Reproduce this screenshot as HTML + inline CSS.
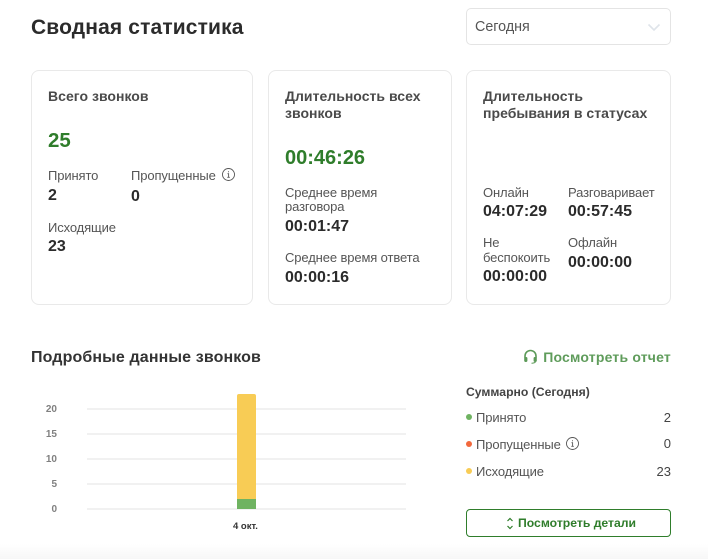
<!DOCTYPE html>
<html lang="ru"><head><meta charset="utf-8"><style>
html,body{margin:0;padding:0;background:#fff}
#p{position:relative;width:708px;height:559px;overflow:hidden;background:#fff;font-family:"Liberation Sans","DejaVu Sans",sans-serif;color:#333}
.t{position:absolute;white-space:nowrap;line-height:1}
.card{position:absolute;box-sizing:border-box;border:1px solid #e9e9e9;border-radius:8px;background:#fff;top:70px;height:235px}
.h{font-size:14px;font-weight:700;color:#4a4a4a;letter-spacing:.03px}
.l{font-size:13px;color:#555;letter-spacing:-.12px}
.v{font-size:16px;font-weight:700;color:#2b2b2b;letter-spacing:0}
.g{font-weight:700;color:#2f7d2b}
.gl{position:absolute;left:87px;width:319px;height:2px;background:#f1f1f1}
.y{position:absolute;left:39px;width:18px;text-align:right;font-size:10px;font-weight:700;color:#808080;line-height:1}
.dot{position:absolute;left:466px;width:6px;height:6px;border-radius:50%}
.r{position:absolute;right:37px;font-size:13px;color:#444;line-height:1}
</style></head><body><div id="p">
<div class="t" style="left:31px;top:17px;font-size:21px;font-weight:700;color:#2b2b2b;letter-spacing:.14px">Сводная статистика</div>
<div style="position:absolute;left:466px;top:8px;width:205px;height:37px;box-sizing:border-box;border:1px solid #e4e4e4;border-radius:5px"></div>
<div class="t" style="left:475px;top:20px;font-size:14.300px;color:#555">Сегодня</div>
<svg style="position:absolute;left:647px;top:23px" width="14" height="9" viewBox="0 0 14 9"><path d="M1.500 1.500 7 7l5.500-5.500" fill="none" stroke="#dfe4ea" stroke-width="1.600"/></svg>

<div class="card" style="left:31px;width:222px"></div>
<div class="card" style="left:268px;width:184px"></div>
<div class="card" style="left:466px;width:205px"></div>

<div class="t h" style="left:48px;top:89px">Всего звонков</div>
<div class="t g" style="left:48px;top:131px;font-size:20.500px">25</div>
<div class="t l" style="left:48px;top:169px">Принято</div>
<div class="t v" style="left:48px;top:188px">2</div>
<div class="t l" style="left:131px;top:169px">Пропущенные</div>
<svg style="position:absolute;left:221px;top:167px" width="15" height="15" viewBox="0 0 15 15"><circle cx="7.500" cy="7.500" r="6" fill="none" stroke="#555" stroke-width=".9"/><path d="M6.500 6.700h1.100v3.500M6.300 10.300h2.500M7.500 4.200v1.100" fill="none" stroke="#555" stroke-width=".9"/></svg>
<div class="t v" style="left:131px;top:189px">0</div>
<div class="t l" style="left:48px;top:221px">Исходящие</div>
<div class="t v" style="left:48px;top:239px">23</div>

<div class="t h" style="left:285px;top:89px">Длительность всех</div>
<div class="t h" style="left:285px;top:106px">звонков</div>
<div class="t g" style="left:285px;top:148px;font-size:20px">00:46:26</div>
<div class="t l" style="left:285px;top:186px">Среднее время</div>
<div class="t l" style="left:285px;top:200px">разговора</div>
<div class="t v" style="left:285px;top:219px">00:01:47</div>
<div class="t l" style="left:285px;top:251px">Среднее время ответа</div>
<div class="t v" style="left:285px;top:270px">00:00:16</div>

<div class="t h" style="left:483px;top:89px">Длительность</div>
<div class="t h" style="left:483px;top:106px">пребывания в статусах</div>
<div class="t l" style="left:483px;top:186px">Онлайн</div>
<div class="t v" style="left:483px;top:204px">04:07:29</div>
<div class="t l" style="left:568px;top:186px">Разговаривает</div>
<div class="t v" style="left:568px;top:204px">00:57:45</div>
<div class="t l" style="left:483px;top:236px">Не</div>
<div class="t l" style="left:483px;top:251px">беспокоить</div>
<div class="t v" style="left:483px;top:269px">00:00:00</div>
<div class="t l" style="left:568px;top:236px">Офлайн</div>
<div class="t v" style="left:568px;top:255px">00:00:00</div>

<div class="t" style="left:31px;top:350px;font-size:16px;font-weight:700;color:#333;letter-spacing:.12px">Подробные данные звонков</div>
<svg style="position:absolute;left:523px;top:349px" width="15" height="15" viewBox="0 0 15 15"><path d="M2 9V7a5.500 5.500 0 0 1 11 0v2" fill="none" stroke="#5c9a58" stroke-width="1.600"/><rect x="1.200" y="8" width="3.200" height="5" rx="1.200" fill="#5c9a58"/><rect x="10.600" y="8" width="3.200" height="5" rx="1.200" fill="#5c9a58"/><path d="M12.500 13c-1 1-2.500 1.200-4 1.200" fill="none" stroke="#5c9a58"/></svg>
<div class="t" style="right:37px;top:350px;font-size:14px;font-weight:700;color:#5f9c5b;letter-spacing:.2px">Посмотреть отчет</div>

<div class="gl" style="top:408px"></div>
<div class="gl" style="top:433px"></div>
<div class="gl" style="top:458px"></div>
<div class="gl" style="top:483px"></div>
<div class="gl" style="top:508px"></div>
<div class="y" style="top:405px">20</div>
<div class="y" style="top:430px">15</div>
<div class="y" style="top:455px">10</div>
<div class="y" style="top:480px">5</div>
<div class="y" style="top:505px">0</div>
<div style="position:absolute;left:237px;top:394px;width:19px;height:105px;background:#f8cc55;border-radius:2px 2px 0 0"></div>
<div style="position:absolute;left:237px;top:499px;width:19px;height:10px;background:#6fb361"></div>
<div class="t" style="left:233px;top:522px;font-size:9.500px;font-weight:700;color:#333">4 окт.</div>

<div class="t" style="left:466px;top:386px;font-size:12.200px;font-weight:700;color:#444">Суммарно (Сегодня)</div>
<div class="dot" style="top:414px;background:#6fb361"></div>
<div class="t l" style="left:476px;top:411px">Принято</div>
<div class="r" style="top:411px">2</div>
<div class="dot" style="top:441px;background:#f2683c"></div>
<div class="t l" style="left:476px;top:438px">Пропущенные</div>
<svg style="position:absolute;left:565px;top:436px" width="15" height="15" viewBox="0 0 15 15"><circle cx="7.500" cy="7.500" r="6" fill="none" stroke="#555" stroke-width=".9"/><path d="M6.500 6.700h1.100v3.500M6.300 10.300h2.500M7.500 4.200v1.100" fill="none" stroke="#555" stroke-width=".9"/></svg>
<div class="r" style="top:437px">0</div>
<div class="dot" style="top:468px;background:#f8cc55"></div>
<div class="t l" style="left:476px;top:465px">Исходящие</div>
<div class="r" style="top:465px">23</div>

<div style="position:absolute;left:466px;top:509px;width:205px;height:28px;box-sizing:border-box;border:1.500px solid #2f7d2b;border-radius:4px"></div>
<svg style="position:absolute;left:506px;top:517px" width="8" height="13" viewBox="0 0 8 13"><path d="M1.500 4 4 1.500 6.500 4M1.500 9 4 11.500 6.500 9" fill="none" stroke="#2f7d2b" stroke-width="1.200"/></svg>
<div class="t" style="left:518px;top:517px;font-size:12.200px;font-weight:700;color:#2f7d2b">Посмотреть детали</div>
<div style="position:absolute;left:0;top:544px;width:708px;height:15px;background:linear-gradient(#fff,#f7f7f7)"></div>
</div></body></html>
